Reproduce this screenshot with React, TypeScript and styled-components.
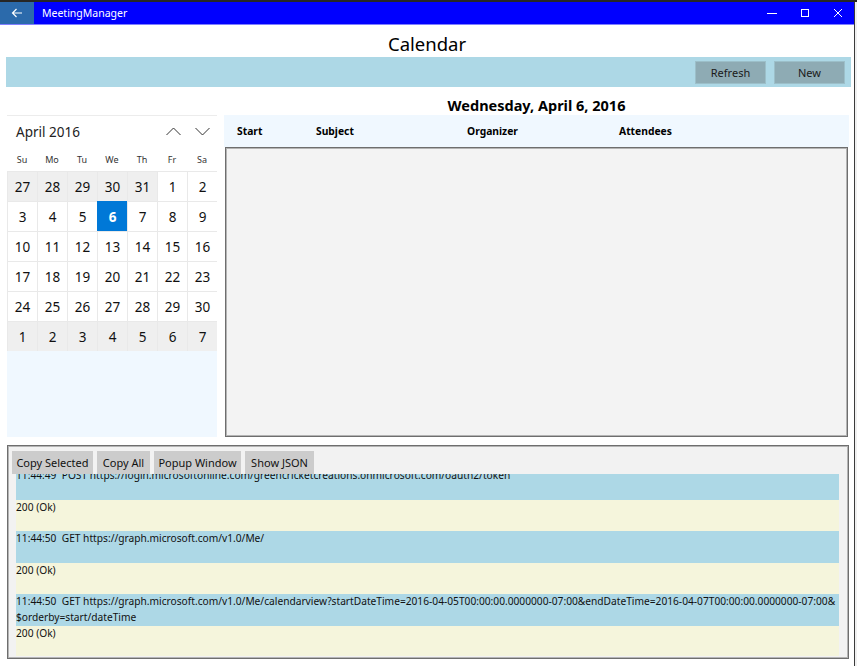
import React from "react";
import styled, { createGlobalStyle } from "styled-components";

const Global = createGlobalStyle`
  html, body { margin: 0; padding: 0; background: #f0f0f0; }
  body { font-family: "Noto Sans", "Open Sans", sans-serif; color: #000; }
  * { box-sizing: border-box; }
`;

const Screen = styled.div`
  width: 857px;
  height: 666px;
  display: flex;
  flex-direction: column;
  overflow: hidden;
`;

const TopStrip = styled.div`
  height: 2px;
  background: #262626;
  flex: none;
`;

const Body = styled.div`
  flex: 1;
  display: flex;
`;

const Window = styled.div`
  width: 855px;
  display: flex;
  flex-direction: column;
  background: #fff;
  border-right: 1px solid #3a3a3a;
`;

const TitleBar = styled.div`
  height: 23px;
  display: flex;
  align-items: stretch;
  background: #0000ff;
  color: #fff;
  border-bottom: 1px solid #7f7fff;
  flex: none;
`;

const BackButton = styled.div`
  width: 34px;
  background: #2b6aab;
  display: flex;
  align-items: center;
  justify-content: center;
`;

const AppName = styled.div`
  font-size: 10.5px;
  line-height: 22px;
  padding-left: 8px;
  flex: 1;
`;

const Ctrl = styled.div`
  width: 33px;
  display: flex;
  align-items: center;
  justify-content: center;
`;

const PageTitle = styled.div`
  height: 32px;
  padding-top: 6px;
  line-height: 26px;
  font-size: 18.5px;
  text-align: center;
  flex: none;
`;

const Toolbar = styled.div`
  height: 30px;
  margin: 0 3px 0 6px;
  background: #add8e6;
  display: flex;
  align-items: center;
  justify-content: flex-end;
  gap: 8px;
  padding-right: 6px;
  flex: none;
`;

const ToolButton = styled.div`
  width: 71px;
  height: 23px;
  background: #8eabb4;
  border: 1px solid #9cbfc9;
  font-size: 11px;
  color: #1a1a1a;
  display: flex;
  align-items: center;
  justify-content: center;
`;

const Main = styled.div`
  margin-left: 7px;
  width: 842px;
  display: grid;
  grid-template-columns: 210px 625px;
  grid-template-rows: 28px 322px;
  column-gap: 7px;
  flex: none;
`;

const DateHeading = styled.div`
  grid-column: 2;
  padding-top: 8px;
  line-height: 20px;
  font-size: 14.5px;
  font-weight: 700;
  text-align: center;
`;

const LeftPanel = styled.div`
  grid-column: 1;
  background: #f0f8ff;
`;

const CalendarBox = styled.div`
  background: #fff;
  border-top: 1px solid #ececec;
  overflow: hidden;
`;

const CalHeader = styled.div`
  height: 31px;
  display: flex;
  align-items: center;
  padding-left: 9px;
`;

const MonthLabel = styled.div`
  font-size: 13.5px;
  color: #222;
  flex: 1;
`;

const NavButton = styled.div`
  width: 29px;
  height: 31px;
  display: flex;
  align-items: center;
  justify-content: center;
`;

const DayNames = styled.div`
  height: 24px;
  display: grid;
  grid-template-columns: repeat(7, 30px);
  align-items: center;
  font-size: 9px;
  color: #333;
  text-align: center;
`;

const DayGrid = styled.div`
  display: grid;
  grid-template-columns: repeat(7, 30px);
  grid-auto-rows: 30px;
`;

const DayCell = styled.div<{ $out?: boolean; $sel?: boolean }>`
  display: flex;
  align-items: center;
  justify-content: center;
  font-size: 13.5px;
  border: 1px solid ${(p) => (p.$sel ? "#0078d7" : "#e9e9e9")};
  margin: 0 -1px -1px 0;
  background: ${(p) => (p.$sel ? "#0078d7" : p.$out ? "#efefef" : "#fff")};
  color: ${(p) => (p.$sel ? "#fff" : "#111")};
  font-weight: ${(p) => (p.$sel ? 700 : 400)};
`;

const RightPanel = styled.div`
  grid-column: 2;
  display: flex;
  flex-direction: column;
`;

const ColumnHeader = styled.div`
  height: 32px;
  background: #f0f8ff;
  display: grid;
  grid-template-columns: 79px 151px 152px 1fr;
  align-items: center;
  padding-left: 13px;
  font-size: 10.3px;
  font-weight: 700;
`;

const EventList = styled.div`
  flex: 1;
  margin-left: 1px;
  margin-right: 1px;
  background: #f3f3f3;
  border: 1px solid #6e6e6e;
  box-shadow: inset 0 0 0 1px #b4b4b4;
`;

const LogPanel = styled.div`
  margin: 8px 0 0 7px;
  width: 842px;
  height: 214px;
  background: #f2f2f2;
  border: 1px solid #6e6e6e;
  box-shadow: inset 0 0 0 1px #b4b4b4;
  padding: 5px 9px 0 4px;
  display: flex;
  flex-direction: column;
  flex: none;
`;

const LogButtons = styled.div`
  display: flex;
  gap: 4px;
  height: 23px;
  flex: none;
`;

const LogButton = styled.div<{ $w: number }>`
  width: ${(p) => p.$w}px;
  height: 23px;
  background: #cccccc;
  font-size: 11px;
  color: #111;
  display: flex;
  align-items: center;
  justify-content: center;
`;

const LogViewport = styled.div`
  margin-left: 4px;
  height: 182px;
  overflow: hidden;
  flex: none;
`;

const LogList = styled.div`
  margin-top: -6px;
`;

const LogEntry = styled.div<{ $kind: "req" | "res" }>`
  min-height: 31.6px;
  line-height: 15.8px;
  font-size: 10.2px;
  color: #111;
  background: ${(p) => (p.$kind === "req" ? "#add8e6" : "#f5f5dc")};
  white-space: pre;
  overflow: hidden;
`;

const dayNames = ["Su", "Mo", "Tu", "We", "Th", "Fr", "Sa"];

const days: { n: number; out?: boolean; sel?: boolean }[] = [
  ...[27, 28, 29, 30, 31].map((n) => ({ n, out: true })),
  ...Array.from({ length: 30 }, (_, i) => ({ n: i + 1, sel: i + 1 === 6 })),
  ...[1, 2, 3, 4, 5, 6, 7].map((n) => ({ n, out: true })),
];

const logs: { kind: "req" | "res"; text: string }[] = [
  {
    kind: "req",
    text: "11:44:49  POST https://login.microsoftonline.com/greencricketcreations.onmicrosoft.com/oauth2/token",
  },
  { kind: "res", text: "200 (Ok)" },
  { kind: "req", text: "11:44:50  GET https://graph.microsoft.com/v1.0/Me/" },
  { kind: "res", text: "200 (Ok)" },
  {
    kind: "req",
    text: "11:44:50  GET https://graph.microsoft.com/v1.0/Me/calendarview?startDateTime=2016-04-05T00:00:00.0000000-07:00&endDateTime=2016-04-07T00:00:00.0000000-07:00&\n$orderby=start/dateTime",
  },
  { kind: "res", text: "200 (Ok)" },
];

export default function App() {
  return (
    <>
      <Global />
      <Screen>
        <TopStrip />
        <Body>
          <Window>
            <TitleBar>
              <BackButton>
                <svg width="12" height="10" viewBox="0 0 12 10">
                  <path d="M11 5H1.5M5.5 1L1.5 5l4 4" stroke="#fff" strokeWidth="1.2" fill="none" />
                </svg>
              </BackButton>
              <AppName>MeetingManager</AppName>
              <Ctrl>
                <svg width="10" height="10" viewBox="0 0 10 10">
                  <path d="M0 5.5h10" stroke="#fff" strokeWidth="1" />
                </svg>
              </Ctrl>
              <Ctrl>
                <svg width="10" height="10" viewBox="0 0 10 10">
                  <rect x="1.5" y="1.5" width="7" height="7" stroke="#fff" strokeWidth="1" fill="none" />
                </svg>
              </Ctrl>
              <Ctrl>
                <svg width="10" height="10" viewBox="0 0 10 10">
                  <path d="M1 1l8 8M9 1l-8 8" stroke="#fff" strokeWidth="1" />
                </svg>
              </Ctrl>
            </TitleBar>
            <PageTitle>Calendar</PageTitle>
            <Toolbar>
              <ToolButton>Refresh</ToolButton>
              <ToolButton>New</ToolButton>
            </Toolbar>
            <Main>
              <DateHeading>Wednesday, April 6, 2016</DateHeading>
              <LeftPanel>
                <CalendarBox>
                  <CalHeader>
                    <MonthLabel>April 2016</MonthLabel>
                    <NavButton>
                      <svg width="15" height="9" viewBox="0 0 15 9">
                        <path d="M0.5 8L7.5 1l7 7" stroke="#333" strokeWidth="1" fill="none" />
                      </svg>
                    </NavButton>
                    <NavButton>
                      <svg width="15" height="9" viewBox="0 0 15 9">
                        <path d="M0.5 1l7 7 7-7" stroke="#333" strokeWidth="1" fill="none" />
                      </svg>
                    </NavButton>
                  </CalHeader>
                  <DayNames>
                    {dayNames.map((d) => (
                      <span key={d}>{d}</span>
                    ))}
                  </DayNames>
                  <DayGrid>
                    {days.map((d, i) => (
                      <DayCell key={i} $out={d.out} $sel={d.sel}>
                        {d.n}
                      </DayCell>
                    ))}
                  </DayGrid>
                </CalendarBox>
              </LeftPanel>
              <RightPanel>
                <ColumnHeader>
                  <span>Start</span>
                  <span>Subject</span>
                  <span>Organizer</span>
                  <span>Attendees</span>
                </ColumnHeader>
                <EventList />
              </RightPanel>
            </Main>
            <LogPanel>
              <LogButtons>
                <LogButton $w={81}>Copy Selected</LogButton>
                <LogButton $w={53}>Copy All</LogButton>
                <LogButton $w={87}>Popup Window</LogButton>
                <LogButton $w={69}>Show JSON</LogButton>
              </LogButtons>
              <LogViewport>
                <LogList>
                  {logs.map((l, i) => (
                    <LogEntry key={i} $kind={l.kind}>
                      {l.text}
                    </LogEntry>
                  ))}
                </LogList>
              </LogViewport>
            </LogPanel>
          </Window>
        </Body>
      </Screen>
    </>
  );
}
